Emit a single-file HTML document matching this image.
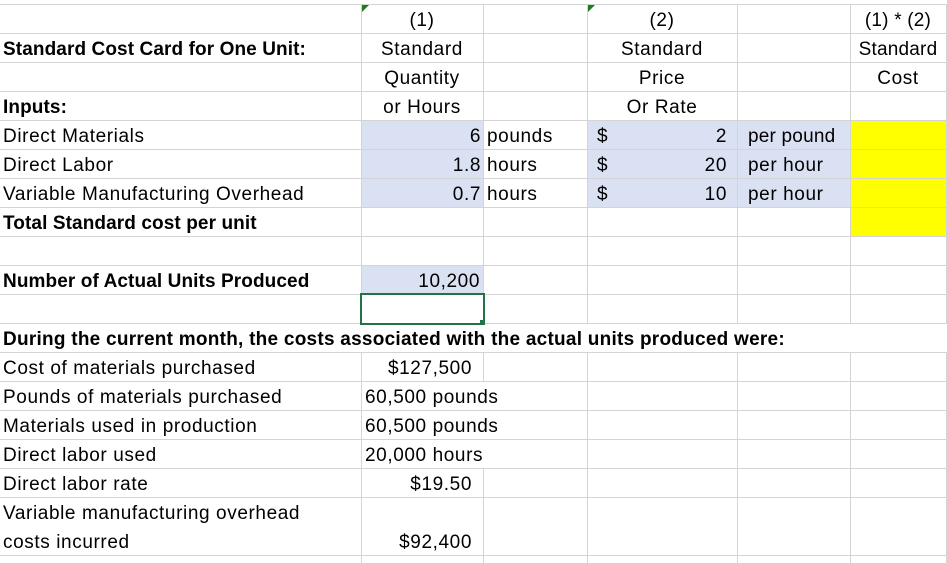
<!DOCTYPE html>
<html><head><meta charset="utf-8"><style>
body{margin:0;width:947px;height:563px;overflow:hidden;background:#fff;position:relative;font-family:"Liberation Sans",Arial,sans-serif;font-size:19px;color:#000;letter-spacing:0.6px}
.h{position:absolute;left:0;width:947px;height:1px;background:#d4d4d4}
.v{position:absolute;width:1px;background:#d4d4d4}
.f{position:absolute}
.t{position:absolute;height:29px;line-height:33px;white-space:nowrap}
.b{font-weight:bold;letter-spacing:0.1px}
.r{text-align:right}
.ctr{text-align:center}
</style></head><body>
<div class="f" style="left:361px;top:120px;width:122px;height:87px;background:#d9e1f2"></div>
<div class="f" style="left:587px;top:120px;width:263px;height:87px;background:#d9e1f2"></div>
<div class="f" style="left:850px;top:120px;width:97px;height:116px;background:#ffff00"></div>
<div class="f" style="left:361px;top:265px;width:122px;height:29px;background:#d9e1f2"></div>
<div class="h" style="top:4px"></div><div class="h" style="top:33px"></div><div class="h" style="top:62px"></div><div class="h" style="top:91px"></div><div class="h" style="top:120px"></div><div class="h" style="top:149px"></div><div class="h" style="top:178px"></div><div class="h" style="top:207px"></div><div class="h" style="top:236px"></div><div class="h" style="top:265px"></div><div class="h" style="top:294px"></div><div class="h" style="top:323px"></div><div class="h" style="top:352px"></div><div class="h" style="top:381px"></div><div class="h" style="top:410px"></div><div class="h" style="top:439px"></div><div class="h" style="top:468px"></div><div class="h" style="top:497px"></div><div class="h" style="top:555px"></div>
<div class="v" style="left:361px;top:4px;height:319px"></div>
<div class="v" style="left:361px;top:352px;height:211px"></div>
<div class="v" style="left:483px;top:4px;height:319px"></div>
<div class="v" style="left:483px;top:352px;height:29px"></div>
<div class="v" style="left:483px;top:468px;height:95px"></div>
<div class="v" style="left:587px;top:4px;height:319px"></div>
<div class="v" style="left:587px;top:352px;height:211px"></div>
<div class="v" style="left:737px;top:4px;height:319px"></div>
<div class="v" style="left:737px;top:352px;height:211px"></div>
<div class="v" style="left:850px;top:4px;height:319px"></div>
<div class="v" style="left:850px;top:352px;height:211px"></div>
<div class="v" style="left:946px;top:4px;height:559px"></div>
<div class="f" style="left:0;top:324px;width:947px;height:28px;background:#fff"></div>
<div class="f" style="left:362px;top:5px;width:0;height:0;border-top:7px solid #1e7b1e;border-right:7px solid transparent"></div>
<div class="f" style="left:588px;top:5px;width:0;height:0;border-top:7px solid #1e7b1e;border-right:7px solid transparent"></div>
<div class="f" style="left:360px;top:293px;border:2px solid #217346;box-sizing:border-box;width:125px;height:32px"></div>
<div class="f" style="left:480px;top:320px;width:5px;height:5px;background:#217346"></div>
<div class="t ctr" style="left:361px;top:4px;width:122px">(1)</div>
<div class="t ctr" style="left:587px;top:4px;width:150px">(2)</div>
<div class="t ctr" style="left:850px;top:4px;width:96px;letter-spacing:0.2px">(1) * (2)</div>
<div class="t b" style="left:3px;top:33px">Standard Cost Card for One Unit:</div>
<div class="t ctr" style="left:361px;top:33px;width:122px">Standard</div>
<div class="t ctr" style="left:587px;top:33px;width:150px">Standard</div>
<div class="t ctr" style="left:850px;top:33px;width:96px;letter-spacing:0.2px">Standard</div>
<div class="t ctr" style="left:361px;top:62px;width:122px">Quantity</div>
<div class="t ctr" style="left:587px;top:62px;width:150px">Price</div>
<div class="t ctr" style="left:850px;top:62px;width:96px">Cost</div>
<div class="t b" style="left:3px;top:91px">Inputs:</div>
<div class="t ctr" style="left:361px;top:91px;width:122px">or Hours</div>
<div class="t ctr" style="left:587px;top:91px;width:150px">Or Rate</div>
<div class="t" style="left:3px;top:120px">Direct Materials</div>
<div class="t" style="left:3px;top:149px">Direct Labor</div>
<div class="t" style="left:3px;top:178px">Variable Manufacturing Overhead</div>
<div class="t b" style="left:3px;top:207px">Total Standard cost per unit</div>
<div class="t r" style="left:361px;top:120px;width:120px">6</div>
<div class="t r" style="left:361px;top:149px;width:120px">1.8</div>
<div class="t r" style="left:361px;top:178px;width:120px">0.7</div>
<div class="t" style="left:487px;top:120px">pounds</div>
<div class="t" style="left:487px;top:149px">hours</div>
<div class="t" style="left:487px;top:178px">hours</div>
<div class="t" style="left:597px;top:120px">$</div>
<div class="t" style="left:597px;top:149px">$</div>
<div class="t" style="left:597px;top:178px">$</div>
<div class="t r" style="left:640px;top:120px;width:87px">2</div>
<div class="t r" style="left:640px;top:149px;width:87px">20</div>
<div class="t r" style="left:640px;top:178px;width:87px">10</div>
<div class="t" style="left:748px;top:120px;letter-spacing:0.2px">per pound</div>
<div class="t" style="left:748px;top:149px">per hour</div>
<div class="t" style="left:748px;top:178px">per hour</div>
<div class="t b" style="left:3px;top:265px">Number of Actual Units Produced</div>
<div class="t r" style="left:361px;top:265px;width:119px">10,200</div>
<div class="t b" style="left:3px;top:323px;letter-spacing:0.25px">During the current month, the costs associated with the actual units produced were:</div>
<div class="t" style="left:3px;top:352px">Cost of materials purchased</div>
<div class="t" style="left:3px;top:381px">Pounds of materials purchased</div>
<div class="t" style="left:3px;top:410px">Materials used in production</div>
<div class="t" style="left:3px;top:439px">Direct labor used</div>
<div class="t" style="left:3px;top:468px">Direct labor rate</div>
<div class="t" style="left:3px;top:497px">Variable manufacturing overhead</div>
<div class="t" style="left:3px;top:526px">costs incurred</div>
<div class="t r" style="left:361px;top:352px;width:111px">$127,500</div>
<div class="t" style="left:365px;top:381px">60,500 pounds</div>
<div class="t" style="left:365px;top:410px">60,500 pounds</div>
<div class="t" style="left:365px;top:439px">20,000 hours</div>
<div class="t r" style="left:361px;top:468px;width:111px">$19.50</div>
<div class="t r" style="left:361px;top:526px;width:111px">$92,400</div>
</body></html>
